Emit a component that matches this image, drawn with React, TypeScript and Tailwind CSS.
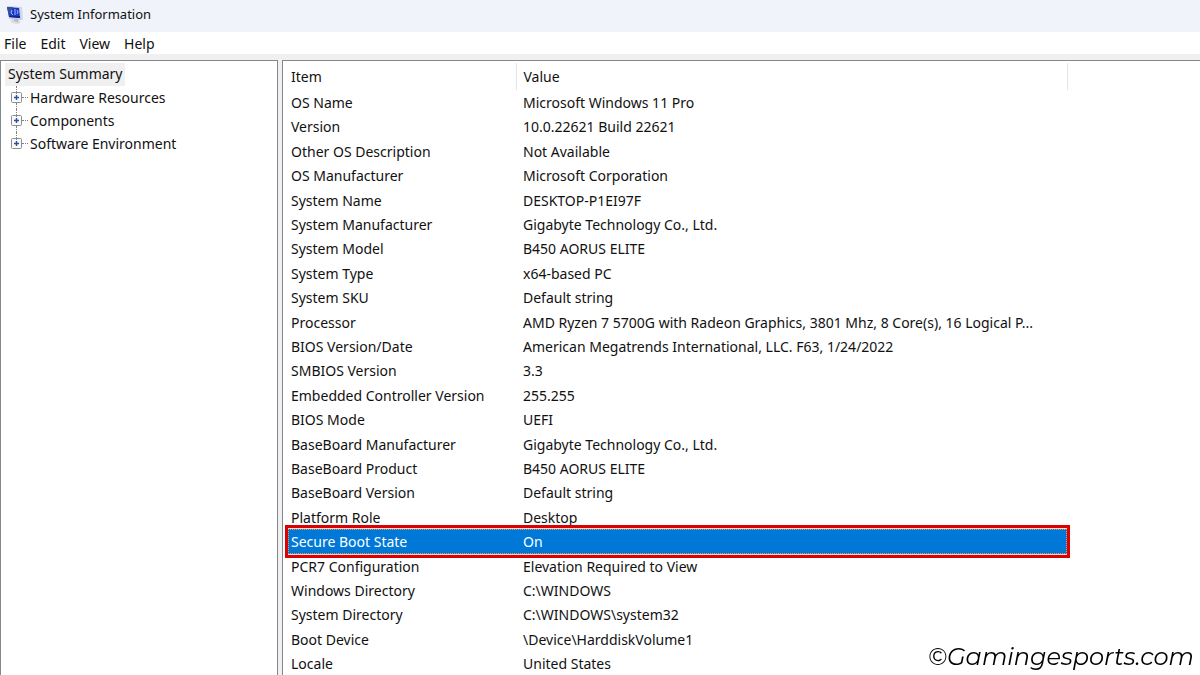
const menus = ['File', 'Edit', 'View', 'Help']

const categories = ['Hardware Resources', 'Components', 'Software Environment']

const rows: [string, string][] = [
  ['OS Name', 'Microsoft Windows 11 Pro'],
  ['Version', '10.0.22621 Build 22621'],
  ['Other OS Description', 'Not Available'],
  ['OS Manufacturer', 'Microsoft Corporation'],
  ['System Name', 'DESKTOP-P1EI97F'],
  ['System Manufacturer', 'Gigabyte Technology Co., Ltd.'],
  ['System Model', 'B450 AORUS ELITE'],
  ['System Type', 'x64-based PC'],
  ['System SKU', 'Default string'],
  ['Processor', 'AMD Ryzen 7 5700G with Radeon Graphics, 3801 Mhz, 8 Core(s), 16 Logical P...'],
  ['BIOS Version/Date', 'American Megatrends International, LLC. F63, 1/24/2022'],
  ['SMBIOS Version', '3.3'],
  ['Embedded Controller Version', '255.255'],
  ['BIOS Mode', 'UEFI'],
  ['BaseBoard Manufacturer', 'Gigabyte Technology Co., Ltd.'],
  ['BaseBoard Product', 'B450 AORUS ELITE'],
  ['BaseBoard Version', 'Default string'],
  ['Platform Role', 'Desktop'],
  ['Secure Boot State', 'On'],
  ['PCR7 Configuration', 'Elevation Required to View'],
  ['Windows Directory', 'C:\\WINDOWS'],
  ['System Directory', 'C:\\WINDOWS\\system32'],
  ['Boot Device', '\\Device\\HarddiskVolume1'],
  ['Locale', 'United States'],
]

const selectedItem = 'Secure Boot State'

function ComputerIcon() {
  return (
    <svg viewBox="0 0 18 20" className="h-5 w-[18px]" aria-hidden="true">
      <path d="M4 16l3-2 6 1 2 2-3 2-6-1z" fill="#d9dbde" />
      <path d="M8 13l4 1v3l-4-1z" fill="#b3b8be" />
      <path d="M1 1l13 1 2 13-13-1z" fill="#c3cde6" />
      <path d="M14 2h2l1 12-1 1z" fill="#d3d8e2" />
      <path d="M1 2l12 1 1 10-11-1z" fill="#1a38c4" />
      <path d="M1 2l6 0-4 9z" fill="#34509f" />
      <path d="M3 11l11 0v2l-11-1z" fill="#12238c" />
      <path d="M6 5l-1 3 2 2M9 4v6M11 5l1 2-1 2" fill="none" stroke="#9dbcf8" />
    </svg>
  )
}

function ExpandIcon() {
  return (
    <svg viewBox="0 0 11 11" className="size-[11px]" aria-hidden="true">
      <rect x="0.5" y="0.5" width="10" height="10" rx="1" fill="#fafafa" stroke="#8e8e8e" />
      <path d="M3 5.5h5M5.5 3v5" stroke="#2f4fa3" strokeWidth="1.4" />
    </svg>
  )
}

export default function App() {
  return (
    <div className="flex h-screen flex-col overflow-hidden bg-white font-['Noto_Sans',sans-serif] text-[14px] text-[#111]">
      <header className="flex h-8 shrink-0 items-center gap-1.5 bg-[#f0f3fa] pb-0.5 pl-1.5">
        <ComputerIcon />
        <h1 className="text-[13px]">System Information</h1>
      </header>
      <nav className="flex h-[22px] shrink-0 items-center gap-3.5 pl-1">
        {menus.map(menu => (
          <button key={menu}>{menu}</button>
        ))}
      </nav>

      <main className="flex min-h-0 flex-1 gap-1 bg-[#f0f0f0] pt-1.5">
        {/* Category tree */}
        <aside className="w-[278px] shrink-0 border border-b-0 border-[#828790] bg-white pt-0.5 pl-1">
          <button className="block h-[23px] bg-[#f0f0f0] pr-0.5 pb-0.5 pl-[3px]">System Summary</button>
          <ul className="ml-1.5">
            {categories.map(category => (
              <li key={category} className="relative h-[23px]">
                <span className="absolute top-0 left-[5px] h-2 border-l border-dotted border-[#808080]" />
                <span className="absolute bottom-0 left-[5px] h-1.5 border-l border-dotted border-[#808080] in-[li:last-child]:hidden" />
                <button className="flex h-full items-center">
                  <ExpandIcon />
                  <span className="w-1.5 border-t border-dotted border-[#808080]" />
                  <span className="pl-0.5">{category}</span>
                </button>
              </li>
            ))}
          </ul>
        </aside>

        {/* Details list */}
        <section className="min-w-0 flex-1 overflow-hidden border border-r-0 border-b-0 border-[#828790] bg-white pt-0.5 pl-0.5">
          <table className="w-[785px] table-fixed text-left">
            <thead>
              <tr className="h-[27px]">
                <th className="w-[231px] border-r border-[#e5e5e5] pl-1.5 font-normal">Item</th>
                <th className="pl-[7px] font-normal">Value</th>
                <th className="w-[3px] border-l border-[#e5e5e5]" />
              </tr>
            </thead>
            <tbody>
              {rows.map(([item, value]) => {
                const selected = item === selectedItem

                return (
                  <tr
                    key={item}
                    className={`h-6 nth-[5n+2]:h-[25px] nth-[5n+4]:h-[25px] ${selected ? 'relative z-0 text-white' : ''}`}
                  >
                    <td className="pl-1.5">
                      {selected && (
                        <span className="absolute -inset-y-1 right-0 left-0 -z-10 border-3 border-[#dc0000] bg-[#0078d7]">
                          <span className="absolute inset-0 border-y border-[#e6dcdc]" />
                          <span className="absolute inset-x-0 inset-y-px border border-dotted border-[#f09a48]" />
                        </span>
                      )}
                      {item}
                    </td>
                    <td colSpan={2} className="pl-[7px] whitespace-nowrap">{value}</td>
                  </tr>
                )
              })}
            </tbody>
          </table>
        </section>
      </main>

      <p className="fixed right-1.5 bottom-0 font-[Montserrat,Lato,sans-serif] text-[24px] leading-9 text-black italic">
        ©Gamingesports.com
      </p>
    </div>
  )
}
